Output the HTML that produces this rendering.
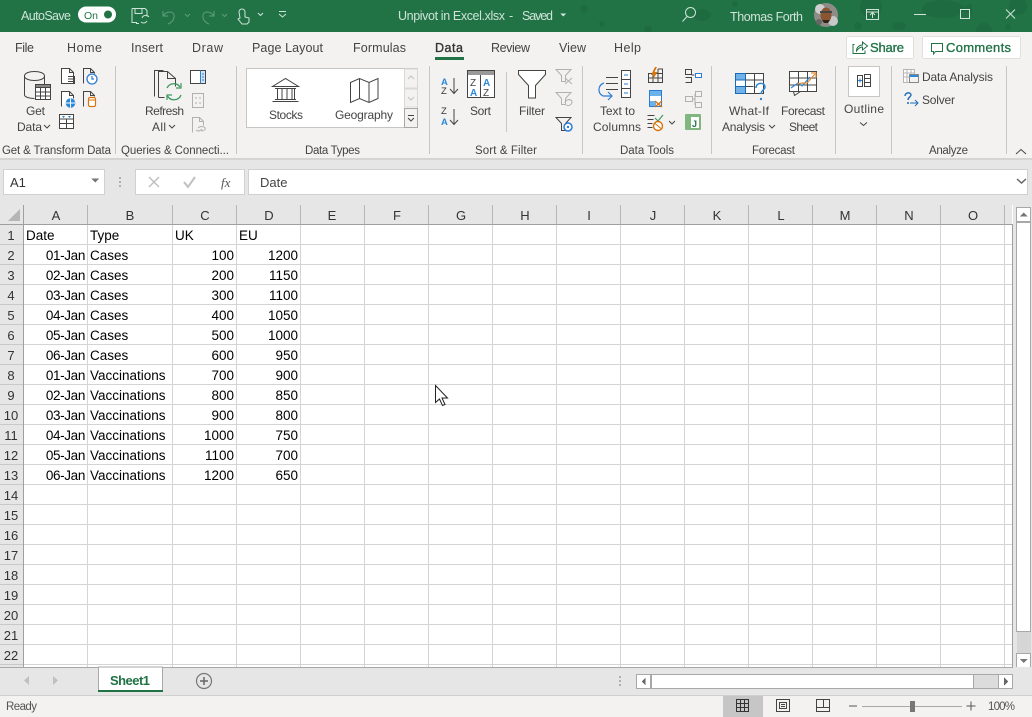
<!DOCTYPE html>
<html><head><meta charset="utf-8"><title>Unpivot in Excel</title>
<style>
html,body{margin:0;padding:0;background:#fff}
svg{display:block;font-family:"Liberation Sans",sans-serif}
.t{font-size:12px;fill:#444}
.g{font-size:11.5px;fill:#444}
.tab{font-size:12.5px;fill:#444}
.c{font-size:13.5px;fill:#000}
.d{letter-spacing:-.35px}
.h{font-size:13px;fill:#333;text-anchor:middle}
.e{text-anchor:end}
.k{fill:none;stroke:#444;stroke-width:1}
.b{fill:none;stroke:#2b7cd3;stroke-width:1.2}
.q{fill:none;stroke:#b0b0b0;stroke-width:1}
.w{fill:#fff;stroke:#444;stroke-width:1}
</style></head><body>
<svg width="1032" height="717" viewBox="0 0 1032 717" xmlns="http://www.w3.org/2000/svg" shape-rendering="crispEdges">
<rect width="1032" height="717" fill="#fff"/>
<!-- title bar -->
<rect width="1032" height="32" fill="#217346"/>
<g fill="#1f6b41" shape-rendering="auto">
<circle cx="584" cy="9" r="4"/><circle cx="648" cy="30" r="4"/><ellipse cx="702" cy="15" rx="9" ry="6"/><circle cx="871" cy="7" r="11"/><circle cx="858" cy="26" r="4"/><ellipse cx="943" cy="9" rx="21" ry="9"/><path d="M960 9l12-6v12z"/><ellipse cx="899" cy="26" rx="7" ry="4"/><circle cx="984" cy="31" r="8"/><circle cx="1018" cy="6" r="9"/><circle cx="1008" cy="27" r="3"/><circle cx="735" cy="4" r="3"/><circle cx="602" cy="24" r="3"/>
</g>
<text x="21" y="20" font-size="12.5" fill="#cfe3d8" textLength="50">AutoSave</text>
<rect x="78" y="6.500" width="38" height="16" rx="8" fill="#fff" shape-rendering="auto"/>
<text x="84" y="19" font-size="10.500" fill="#217346">On</text>
<circle cx="108" cy="14.500" r="4" fill="#217346" shape-rendering="auto"/>
<g fill="none" stroke="#cfe3d8" stroke-width="1" shape-rendering="auto">
<path d="M132 8.500h13l2 2v6M132 8.500v14h5M135 8.500v5h7v-5M136 23.500h3"/><path d="M142 18a4 4 0 0 1 7-1M147 21a4 4 0 0 1-6 1"/>
<g stroke="#5f9c7b"><path d="M163 11v5h5M163 16c3-5 12-6 11 1 0 3-3 6-6 7"/><path d="M185 14l2.500 2.500 2.500-2.500"/><path d="M214 11v5h-5M214 16c-3-5-12-6-11 1 0 3 3 6 6 7"/><path d="M222 14l2.500 2.500 2.500-2.500"/></g>
<path d="M239 12a3 3 0 0 1 6 0v5l4 1v4l-2 2h-5l-4-5 2-1z"/><path d="M258 13l2.500 2.500 2.500-2.500"/>
<path d="M279 11.500h7M279 14l3.500 3 3.500-3"/>
<circle cx="690.500" cy="12.500" r="5"/><path d="M687 16.500l-4.500 5"/>
<rect x="866.500" y="9.500" width="12" height="10" stroke-width="1"/><path d="M866 12h13M872.500 18v-5M870 15l2.500-2.500 2.500 2.500"/>
<path d="M914 14.500h12"/>
<rect x="960.500" y="9.500" width="9" height="9"/><path d="M1006 9.500l9 9M1015 9.500l-9 9"/>
</g>
<text x="398" y="20" font-size="12.500" fill="#cfe3d8" textLength="107">Unpivot in Excel.xlsx</text>
<text x="509" y="20" font-size="12.500" fill="#cfe3d8">-</text>
<text x="522" y="20" font-size="12.500" fill="#cfe3d8" textLength="31">Saved</text>
<path d="M560 13.500h6l-3 3z" fill="#cfe3d8"/>
<text x="730" y="21" font-size="12.500" fill="#cfe3d8" textLength="73">Thomas Forth</text>
<g shape-rendering="auto"><circle cx="826" cy="15" r="12" fill="#8f8c88"/><circle cx="820" cy="9" r="5" fill="#cfcfcf"/><circle cx="833" cy="21" r="5" fill="#c8c8c8"/><circle cx="819" cy="22" r="3" fill="#666"/><ellipse cx="826" cy="15" rx="5.500" ry="7.500" fill="#8a5530"/><rect x="820" y="11" width="12" height="2" fill="#444"/><path d="M822 20h8l-2 3h-4z" fill="#332218"/></g>
<!-- ribbon -->
<rect y="32" width="1032" height="126" fill="#f3f2f1"/>
<rect y="158" width="1032" height="2" fill="#d4d4d4"/>
<text class="tab" x="15" y="52" textLength="19">File</text>
<text class="tab" x="67" y="52" textLength="35">Home</text>
<text class="tab" x="131" y="52" textLength="32">Insert</text>
<text class="tab" x="192" y="52" textLength="31">Draw</text>
<text class="tab" x="252" y="52" textLength="71">Page Layout</text>
<text class="tab" x="353" y="52" textLength="53">Formulas</text>
<text class="tab" x="435" y="52" textLength="28" style="fill:#333;stroke:#333;stroke-width:.35">Data</text>
<rect x="435" y="57" width="29" height="3" fill="#217346"/>
<text class="tab" x="491" y="52" textLength="39">Review</text>
<text class="tab" x="559" y="52" textLength="27">View</text>
<text class="tab" x="614" y="52" textLength="27">Help</text>
<rect x="846.500" y="36.500" width="67" height="22" rx="2" fill="#fff" stroke="#e1dfdd"/>
<g fill="none" stroke="#217346" shape-rendering="auto"><path d="M854.500 44.500h-1.500v9h12v-3M856.500 51c0-4 3-6 6-6v-3l5 4-5 4v-3c-2 0-4 1-6 4z"/></g>
<text x="870" y="52" font-size="13" fill="#217346" stroke="#217346" stroke-width=".35" textLength="34">Share</text>
<rect x="922.500" y="36.500" width="98" height="22" rx="2" fill="#fff" stroke="#e1dfdd"/>
<path d="M931.500 43.500h11v8h-7l-2 2.500v-2.500h-2z" fill="none" stroke="#217346" shape-rendering="auto"/>
<text x="946" y="52" font-size="13" fill="#217346" stroke="#217346" stroke-width=".35" textLength="65">Comments</text>
<!-- separators -->
<g fill="#c8c6c4">
<rect x="115" y="66" width="1" height="88"/><rect x="236" y="66" width="1" height="88"/><rect x="429" y="66" width="1" height="88"/><rect x="582" y="66" width="1" height="88"/><rect x="711" y="66" width="1" height="88"/><rect x="835" y="66" width="1" height="88"/><rect x="891" y="66" width="1" height="88"/><rect x="1006" y="66" width="1" height="88"/><rect x="506" y="72" width="1" height="60"/>
</g>
<!-- group labels -->
<text class="g" x="2" y="154" textLength="109">Get &amp; Transform Data</text>
<text class="g" x="121" y="154" textLength="108">Queries &amp; Connecti...</text>
<text class="g" x="305" y="154" textLength="55">Data Types</text>
<text class="g" x="475" y="154" textLength="62">Sort &amp; Filter</text>
<text class="g" x="620" y="154" textLength="54">Data Tools</text>
<text class="g" x="752" y="154" textLength="43">Forecast</text>
<text class="g" x="929" y="154" textLength="39">Analyze</text>
<!-- Get data -->
<text class="t" x="26" y="115" textLength="19">Get</text>
<text class="t" x="17" y="131" textLength="25">Data</text>
<path class="k" d="M44 125l3 3 3-3" shape-rendering="auto"/>
<g shape-rendering="auto">
<path class="k" d="M24.500 76v19c0 2 5 3.500 10 3.500M44.500 76v8M24.500 76c0-6 20-6 20 0s-20 6-20 0"/>
<rect x="35.500" y="84.500" width="15" height="15" fill="#fff" stroke="#444"/><rect x="35.500" y="84.500" width="15" height="3" fill="#888" stroke="#444"/>
<path class="k" d="M35.500 92h15M35.500 96h15M40.500 88v11M45.500 88v11"/>
<path class="w" d="M61.500 83.500v-15h8l4 4v11zM69.500 68.500v4h4"/><path class="k" d="M68 76.500h6.500v7H68M68 79h6M68 81.500h6"/>
<path class="k" d="M83.500 83.500v-15h7l4 4v1M90.500 68.500v4h4"/><circle cx="92" cy="79" r="5" fill="#fff" stroke="#2b7cd3" stroke-width="1.300"/><path class="b" d="M92 76v3h2"/>
<path class="w" d="M61.500 106.500v-15h8l4 4v3M69.500 91.500v4h4"/><circle cx="70.500" cy="103" r="4.800" fill="#2b88d8"/><path d="M66 103h9M70.500 98.500v9" stroke="#fff" stroke-width="1"/>
<path class="k" d="M83.500 106.500v-15h7l4 4v1M90.500 91.500v4h4"/><rect x="88.500" y="97.500" width="7" height="9" rx="1.500" fill="#fff" stroke="#d9730d" stroke-width="1.200"/><path d="M88.500 100h7" stroke="#d9730d"/>
<rect x="59.500" y="114.500" width="14" height="14" fill="#fff" stroke="#444"/><path class="k" d="M59.500 119h14M59.500 123.500h14M66.500 119v9.500"/><path d="M62 116h3l-1.500 2zM68 116h3l-1.500 2z" fill="#2b7cd3"/>
</g>
<!-- refresh -->
<text class="t" x="145" y="115" textLength="39">Refresh</text>
<text class="t" x="152" y="131" textLength="14">All</text>
<path class="k" d="M169 125l3 3 3-3" shape-rendering="auto"/>
<g shape-rendering="auto">
<path class="k" d="M154.500 96.500v-26h9M158.500 97.500v-26h9l8 7v8M158.500 97.500h6M167.500 71.500v7h8"/>
<path d="M167 88a7.500 7.500 0 0 1 13-1M181 95a7.500 7.500 0 0 1-13.500 1" fill="none" stroke="#3d9a60" stroke-width="1.300"/><path d="M181 83v5h-5M167 100v-5h5" fill="none" stroke="#3d9a60" stroke-width="1.200"/>
<rect x="190.500" y="70.500" width="15" height="13" fill="#fff" stroke="#444"/><rect x="200" y="71" width="5" height="12" fill="#cfe4f5"/><path d="M200.500 70.500v13" stroke="#2b7cd3"/><path d="M202 74h2M202 77h2M202 80h2" stroke="#2b7cd3"/>
<rect x="192.500" y="93.500" width="11" height="14" class="q"/><path class="q" d="M195 98h2M195 103h2M199 98h2M199 103h2"/>
<path class="q" d="M192.500 132.500v-15h7l4 4v4M199.500 117.500v4h4M198 128c2-2 6-2 7 0s-2 3-4 3M202 129c-2 2-4 3-6 1"/>
</g>
<!-- data types gallery -->
<rect x="246.500" y="68.500" width="171" height="59" fill="#fff" stroke="#c8c6c4"/>
<rect x="404.500" y="69" width="13" height="19" fill="#f3f2f1" stroke="#d8d8d8"/>
<rect x="404.500" y="89" width="13" height="18" fill="#f3f2f1" stroke="#d8d8d8"/>
<rect x="404.500" y="108.500" width="13" height="19" fill="#f3f2f1" stroke="#a8a8a8"/>
<g shape-rendering="auto">
<path d="M408 79l3-3 3 3M408 97l3 3 3-3" fill="none" stroke="#c0c0c0"/>
<path class="k" d="M408 115.500h6M408 118l3 3 3-3"/>
<path class="k" d="M272.500 86.500h26l-13-8zM275 88.500h21M275 99.500h21M272.500 101.500h26M277.500 89v10M282 89v10M287 89v10M292 89v10M294.500 89v10"/>
<path class="k" d="M350.500 82.500l9-4 9.500 4 9-4v20l-9 4-9.500-4-9 4zM359.500 78.500v20M369 82.500v20"/>
</g>
<text class="t" x="269" y="119" textLength="34">Stocks</text>
<text class="t" x="335" y="119" textLength="58">Geography</text>
<!-- sort -->
<g shape-rendering="auto">
<text x="441" y="85" font-size="9.500" font-weight="700" fill="#2b88d8">A</text><text x="441" y="94" font-size="9.500" fill="#333">Z</text>
<path class="k" d="M454 78v15M450 89l4 4.500 4-4.500"/>
<text x="441" y="114" font-size="9.500" fill="#333">Z</text><text x="441" y="125" font-size="9.500" font-weight="700" fill="#2b88d8">A</text>
<path class="k" d="M454 109v15M450 120l4 4.500 4-4.500"/>
</g>
<rect x="467.500" y="70.500" width="27" height="27" fill="#fff" stroke="#444"/><rect x="468" y="71" width="26" height="4" fill="#999"/><path d="M480.500 75v22" stroke="#444"/>
<text x="470" y="86" font-size="10" fill="#444">Z</text><text x="470" y="96" font-size="10" font-weight="700" fill="#2b88d8">A</text><text x="483" y="86" font-size="10" font-weight="700" fill="#2b88d8">A</text><text x="483" y="96" font-size="10" fill="#444">Z</text>
<text class="t" x="470" y="115" textLength="21">Sort</text>
<!-- filter -->
<g shape-rendering="auto">
<path d="M518.500 70.500h27v4l-10 11v12.500h-7V85.500l-10-11z" fill="#fff" stroke="#444"/>
<path class="q" d="M556 69.500h15l-5.500 6v6h-4v-6zM565 78l7 6M572 78l-7 6"/>
<path class="q" d="M556 92.500h15l-5.500 6v6h-4v-6zM565 103a4 4 0 0 1 7-2M572 101a4 4 0 0 1-6 4"/>
<path class="k" d="M556 117.500h15l-5.500 6v7h-4v-7z"/><circle cx="568" cy="127" r="4" fill="#fff" stroke="#2b7cd3" stroke-width="1.500"/><circle cx="568" cy="127" r="1.200" fill="#2b7cd3"/>
</g>
<text class="t" x="519" y="115" textLength="26">Filter</text>
<!-- data tools -->
<text class="t" x="600" y="115" textLength="35">Text to</text>
<text class="t" x="593" y="131" textLength="48">Columns</text>
<g shape-rendering="auto">
<path class="k" d="M605 77.500h12M605 83.500h12M605 89.500h12" transform="translate(1 0)"/>
<rect x="621.500" y="70.500" width="9" height="27" fill="#fff" stroke="#444"/><path class="k" d="M621.500 79.500h9M621.500 88.500h9"/><path d="M624 75h4M624 84h4M624 93h4" stroke="#2b7cd3"/>
<path class="b" d="M604 83c-6 2-7 10-1 13h9M608 92l4 4-4 4" stroke-width="1.300"/>
<rect x="648.500" y="73.500" width="14" height="9" class="k"/><path class="k" d="M648.500 78h14M653 73v10M658 69v14M658 69h4.500v5"/><path d="M655 67l-4 8h3l-1.500 5 5-8h-3l2.500-5z" fill="#d9730d"/>
<rect x="649.500" y="90.500" width="12" height="16" fill="#fff" stroke="#2b7cd3"/><rect x="650" y="91" width="11" height="5" fill="#6cb2ea"/><rect x="650" y="101" width="6" height="5" fill="#6cb2ea"/><path d="M655 101l7 6M662 101l-7 6" stroke="#d9730d" stroke-width="1.400"/>
<path class="k" d="M647.500 115.500h7M647.500 119.500h6M647.500 123.500h5M647.500 127.500h5"/><path d="M655 118l3 3 5-6" fill="none" stroke="#3d9a60" stroke-width="1.200"/><circle cx="658" cy="126" r="4.500" fill="#fff" stroke="#d9730d" stroke-width="1.400"/><path d="M655 123.500l6 5" stroke="#d9730d"/>
<path class="k" d="M669 121l3 3 3-3"/>
<path class="k" d="M685.500 69.500h6v5h-6zM685.500 77.500h6v5h-6M691.500 75h3"/><rect x="695.500" y="73.500" width="6" height="4" fill="#fff" stroke="#2b7cd3"/>
<path class="q" d="M685.500 96.500h7v5h-7zM695.500 91.500h6v5h-6zM695.500 102.500h6v5h-6zM692.500 99h3M695 94v11" stroke="#a0a0a0"/>
<rect x="685" y="114" width="16" height="16" rx="1" fill="#7fb77e"/><rect x="691" y="117" width="8" height="11" fill="#fff"/><text x="692" y="127" font-size="9" font-weight="700" fill="#217346">J</text>
<rect x="735.500" y="73.500" width="28" height="20" fill="#fff" stroke="#444"/><rect x="735.500" y="73.500" width="10" height="6.500" fill="#71b2e7" stroke="#1b6cb8"/><rect x="735.500" y="86.500" width="10" height="7" fill="#71b2e7" stroke="#1b6cb8"/><rect x="735.500" y="80" width="10" height="6.500" fill="none" stroke="#1b6cb8"/><path class="k" d="M745.500 80h18M745.500 86.500h8M754.500 74v19"/>
<path d="M756 88c0-6 9-6 9-1 0 3-4 3-4 7" fill="none" stroke="#2b88d8" stroke-width="1.500" shape-rendering="auto"/><circle cx="761" cy="99" r="1.200" fill="#2b88d8"/>
<rect x="789.500" y="71.500" width="27" height="20" fill="#fff" stroke="#444"/><path class="k" d="M789.500 78h27M789.500 85h27M798.500 72v19M807.500 72v19M793.500 91.500l1 4 6-4"/>
<path d="M791 88l7-5 4 3 8-9" fill="none" stroke="#2b88d8" stroke-width="1.200"/><path d="M797 84l6-1 4 0 8-9M811 73h5v5" fill="none" stroke="#e08a3c" stroke-width="1.200"/>
</g>
<text class="t" x="729" y="115" textLength="40">What-If</text>
<text class="t" x="722" y="131" textLength="43">Analysis</text>
<path class="k" d="M769 125l3 3 3-3" shape-rendering="auto"/>
<text class="t" x="781" y="115" textLength="44">Forecast</text>
<text class="t" x="789" y="131" textLength="29">Sheet</text>
<!-- outline -->
<rect x="848.500" y="66.500" width="31" height="30" fill="#fff" stroke="#c8c6c4"/>
<rect x="857.500" y="75.500" width="5" height="11" class="k"/><rect x="864.500" y="74.500" width="6" height="12" fill="#fff" stroke="#444"/><path class="k" d="M864.500 78.500h6M864.500 82.500h6"/><path d="M858 80.500h4M860 78.500v4" stroke="#2b7cd3"/>
<text class="t" x="844" y="113" textLength="40">Outline</text>
<path class="k" d="M860 122.500l3.500 3 3.500-3" shape-rendering="auto"/>
<!-- analysis -->
<rect x="903.500" y="69.500" width="11" height="13" fill="#fff" stroke="#b5b5b5"/><path d="M903.500 73h11M903.500 77h11M907 70v13M911 70v13" stroke="#b5b5b5"/><rect x="909.500" y="74.500" width="9" height="8" fill="#f3f2f1" stroke="#888"/><rect x="910" y="75" width="8" height="2" fill="#2b88d8"/>
<text class="t" x="922" y="81" textLength="71">Data Analysis</text>
<g shape-rendering="auto"><path d="M905 96c0-4 6-4 6-1 0 2-3 2-3 5" fill="none" stroke="#1b6cb8" stroke-width="1.400"/><circle cx="908" cy="103" r="1" fill="#1b6cb8"/><path d="M910 103h8M915 100l3 3-3 3" fill="none" stroke="#1b6cb8"/></g>
<text class="t" x="922" y="104" textLength="33">Solver</text>
<path class="k" d="M1016 154l5-4.500 5 4.500" shape-rendering="auto"/>
<!-- formula bar -->
<rect y="160" width="1032" height="45" fill="#e6e6e6"/>
<rect x="3.500" y="169.500" width="101" height="25" fill="#fff" stroke="#d0d0d0"/>
<text x="10" y="187" font-size="13" fill="#333">A1</text>
<path d="M91 178.500h8l-4 4z" fill="#777"/>
<g fill="#b0b0b0"><rect x="119" y="177" width="2" height="2"/><rect x="119" y="181" width="2" height="2"/><rect x="119" y="185" width="2" height="2"/></g>
<rect x="135.500" y="169.500" width="109" height="25" fill="#fff" stroke="#d0d0d0"/>
<g shape-rendering="auto"><path d="M149 177l10 10M159 177l-10 10" stroke="#c0c0c0" stroke-width="1.500"/><path d="M184 182l4 5 7-10" fill="none" stroke="#c0c0c0" stroke-width="2"/></g>
<text x="221" y="187" font-size="13" font-family="Liberation Serif" font-style="italic" fill="#555">fx</text>
<rect x="248.500" y="169.500" width="779" height="25" fill="#fff" stroke="#d0d0d0"/>
<text x="260" y="187" font-size="13" fill="#444">Date</text>
<path d="M1017 179l4.500 4 4.500-4" fill="none" stroke="#666" stroke-width="1.500" shape-rendering="auto"/>
<!-- headers -->
<rect y="205" width="1012" height="20" fill="#e6e6e6"/>
<rect y="205" width="24" height="462" fill="#e6e6e6"/>
<path d="M20 209v12H8z" fill="#b5b5b5" shape-rendering="auto"/>
<!-- gridlines -->
<path stroke="#d4d4d4" fill="none" d="M87.500 225V667M172.500 225V667M236.500 225V667M300.500 225V667M364.500 225V667M428.500 225V667M492.500 225V667M556.500 225V667M620.500 225V667M684.500 225V667M748.500 225V667M812.500 225V667M876.500 225V667M940.500 225V667M1004.500 225V667
M24 244.500H1012M24 264.500H1012M24 284.500H1012M24 304.500H1012M24 324.500H1012M24 344.500H1012M24 364.500H1012M24 384.500H1012M24 404.500H1012M24 424.500H1012M24 444.500H1012M24 464.500H1012M24 484.500H1012M24 504.500H1012M24 524.500H1012M24 544.500H1012M24 564.500H1012M24 584.500H1012M24 604.500H1012M24 624.500H1012M24 644.500H1012M24 664.500H1012"/>
<path stroke="#b5b5b5" fill="none" d="M87.500 205V224M172.500 205V224M236.500 205V224M300.500 205V224M364.500 205V224M428.500 205V224M492.500 205V224M556.500 205V224M620.500 205V224M684.500 205V224M748.500 205V224M812.500 205V224M876.500 205V224M940.500 205V224M1004.500 205V224"/>
<path stroke="#c8c8c8" fill="none" d="M0 244.500H23M0 264.500H23M0 284.500H23M0 304.500H23M0 324.500H23M0 344.500H23M0 364.500H23M0 384.500H23M0 404.500H23M0 424.500H23M0 444.500H23M0 464.500H23M0 484.500H23M0 504.500H23M0 524.500H23M0 544.500H23M0 564.500H23M0 584.500H23M0 604.500H23M0 624.500H23M0 644.500H23M0 664.500H23"/>
<path stroke="#9f9f9f" fill="none" d="M23.500 205V667M0 224.500H1012M1012.500 224V667"/>
<g class="cols">
<text class="h" x="56" y="220">A</text><text class="h" x="130" y="220">B</text><text class="h" x="205" y="220">C</text><text class="h" x="269" y="220">D</text><text class="h" x="332" y="220">E</text><text class="h" x="397" y="220">F</text><text class="h" x="461" y="220">G</text><text class="h" x="525" y="220">H</text><text class="h" x="589" y="220">I</text><text class="h" x="653" y="220">J</text><text class="h" x="717" y="220">K</text><text class="h" x="781" y="220">L</text><text class="h" x="845" y="220">M</text><text class="h" x="909" y="220">N</text><text class="h" x="973" y="220">O</text>
</g>
<g>
<text class="h" x="11" y="240">1</text><text class="h" x="11" y="260">2</text><text class="h" x="11" y="280">3</text><text class="h" x="11" y="300">4</text><text class="h" x="11" y="320">5</text><text class="h" x="11" y="340">6</text><text class="h" x="11" y="360">7</text><text class="h" x="11" y="380">8</text><text class="h" x="11" y="400">9</text><text class="h" x="11" y="420">10</text><text class="h" x="11" y="440">11</text><text class="h" x="11" y="460">12</text><text class="h" x="11" y="480">13</text><text class="h" x="11" y="500">14</text><text class="h" x="11" y="520">15</text><text class="h" x="11" y="540">16</text><text class="h" x="11" y="560">17</text><text class="h" x="11" y="580">18</text><text class="h" x="11" y="600">19</text><text class="h" x="11" y="620">20</text><text class="h" x="11" y="640">21</text><text class="h" x="11" y="660">22</text>
</g>
<!-- cells -->
<text class="c" x="26" y="240">Date</text><text class="c" x="90" y="240">Type</text><text class="c" x="175" y="240">UK</text><text class="c" x="239" y="240">EU</text>
<text class="c e d" x="85" y="260">01-Jan</text><text class="c" x="90" y="260">Cases</text><text class="c e" x="234" y="260">100</text><text class="c e" x="298" y="260">1200</text>
<text class="c e d" x="85" y="280">02-Jan</text><text class="c" x="90" y="280">Cases</text><text class="c e" x="234" y="280">200</text><text class="c e" x="298" y="280">1150</text>
<text class="c e d" x="85" y="300">03-Jan</text><text class="c" x="90" y="300">Cases</text><text class="c e" x="234" y="300">300</text><text class="c e" x="298" y="300">1100</text>
<text class="c e d" x="85" y="320">04-Jan</text><text class="c" x="90" y="320">Cases</text><text class="c e" x="234" y="320">400</text><text class="c e" x="298" y="320">1050</text>
<text class="c e d" x="85" y="340">05-Jan</text><text class="c" x="90" y="340">Cases</text><text class="c e" x="234" y="340">500</text><text class="c e" x="298" y="340">1000</text>
<text class="c e d" x="85" y="360">06-Jan</text><text class="c" x="90" y="360">Cases</text><text class="c e" x="234" y="360">600</text><text class="c e" x="298" y="360">950</text>
<text class="c e d" x="85" y="380">01-Jan</text><text class="c" x="90" y="380">Vaccinations</text><text class="c e" x="234" y="380">700</text><text class="c e" x="298" y="380">900</text>
<text class="c e d" x="85" y="400">02-Jan</text><text class="c" x="90" y="400">Vaccinations</text><text class="c e" x="234" y="400">800</text><text class="c e" x="298" y="400">850</text>
<text class="c e d" x="85" y="420">03-Jan</text><text class="c" x="90" y="420">Vaccinations</text><text class="c e" x="234" y="420">900</text><text class="c e" x="298" y="420">800</text>
<text class="c e d" x="85" y="440">04-Jan</text><text class="c" x="90" y="440">Vaccinations</text><text class="c e" x="234" y="440">1000</text><text class="c e" x="298" y="440">750</text>
<text class="c e d" x="85" y="460">05-Jan</text><text class="c" x="90" y="460">Vaccinations</text><text class="c e" x="234" y="460">1100</text><text class="c e" x="298" y="460">700</text>
<text class="c e d" x="85" y="480">06-Jan</text><text class="c" x="90" y="480">Vaccinations</text><text class="c e" x="234" y="480">1200</text><text class="c e" x="298" y="480">650</text>
<!-- cursor -->
<path d="M435.500 385.500v17l4-3.500 3 6.500 2.500-1-3-6.500h5.500z" fill="#fff" stroke="#222" shape-rendering="auto"/>
<!-- vertical scrollbar -->
<rect x="1013" y="205" width="19" height="462" fill="#e6e6e6"/>
<rect x="1016.500" y="207.500" width="14" height="14" fill="#fff" stroke="#a8a8a8"/>
<path d="M1019.500 216.500h8l-4-4z" fill="#777"/>
<rect x="1016.500" y="222.500" width="14" height="409" fill="#fff" stroke="#a8a8a8"/>
<rect x="1017" y="632" width="14" height="21" fill="#d6d6d6"/>
<rect x="1016.500" y="653.500" width="14" height="14" fill="#fff" stroke="#a8a8a8"/>
<path d="M1019.500 659h8l-4 4z" fill="#777"/>
<!-- sheet tabs -->
<rect y="667" width="1032" height="28" fill="#e6e6e6"/>
<rect y="667" width="1013" height="1" fill="#a8a8a8"/>
<rect x="98.500" y="667" width="64" height="24" fill="#fff" stroke="#a8a8a8"/>
<rect x="98" y="690" width="65" height="2" fill="#217346"/>
<text x="110" y="685" font-size="13" font-weight="700" fill="#217346" textLength="40">Sheet1</text>
<path d="M29 676v9l-5-4.500zM53 676v9l5-4.500z" fill="#c0c0c0" shape-rendering="auto"/>
<g shape-rendering="auto"><circle cx="204" cy="681" r="7.500" fill="none" stroke="#777" stroke-width="1.200"/><path d="M200 681h8M204 677v8" stroke="#666" stroke-width="1.500"/></g>
<g fill="#b0b0b0"><rect x="619" y="676" width="2" height="2"/><rect x="619" y="680" width="2" height="2"/><rect x="619" y="684" width="2" height="2"/></g>
<rect x="636.500" y="674.500" width="376" height="14" fill="#dcdcdc" stroke="#a8a8a8"/>
<rect x="636.500" y="674.500" width="14" height="14" fill="#fff" stroke="#a8a8a8"/>
<path d="M645.500 677.500v8l-4-4z" fill="#666"/>
<rect x="651.500" y="674.500" width="322" height="14" fill="#fff" stroke="#a8a8a8"/>
<rect x="998.500" y="674.500" width="14" height="14" fill="#fff" stroke="#a8a8a8"/>
<path d="M1004 677.500v8l4-4z" fill="#666"/>
<!-- status bar -->
<rect y="695" width="1032" height="22" fill="#f3f2f1"/>
<rect y="695" width="1032" height="1" fill="#d0d0d0"/>
<text x="6" y="710" font-size="11.500" fill="#555" textLength="31">Ready</text>
<rect x="723" y="696" width="40" height="21" fill="#c6c6c6"/>
<path fill="none" stroke="#333" d="M736.500 699.500h12v12h-12zM736.500 703.500h12M736.500 707.500h12M740.500 699.500v12M744.500 699.500v12"/>
<path fill="none" stroke="#444" d="M776.500 699.500h13v12h-13zM779.500 702.500h7v6h-7zM781 704.500h4M781 706.500h4"/>
<path fill="none" stroke="#444" d="M816.500 699.500h13v12h-13zM816.500 707.500h13M823.500 699.500v8"/>
<path d="M849 706h8M971 701.500v9M966.500 706h9" stroke="#555" fill="none"/>
<rect x="862" y="706" width="100" height="1" fill="#a8a8a8"/>
<rect x="910" y="701" width="5" height="11" fill="#777"/>
<text x="988" y="710" font-size="11.500" fill="#555" textLength="27">100%</text>
</svg>
</body></html>
